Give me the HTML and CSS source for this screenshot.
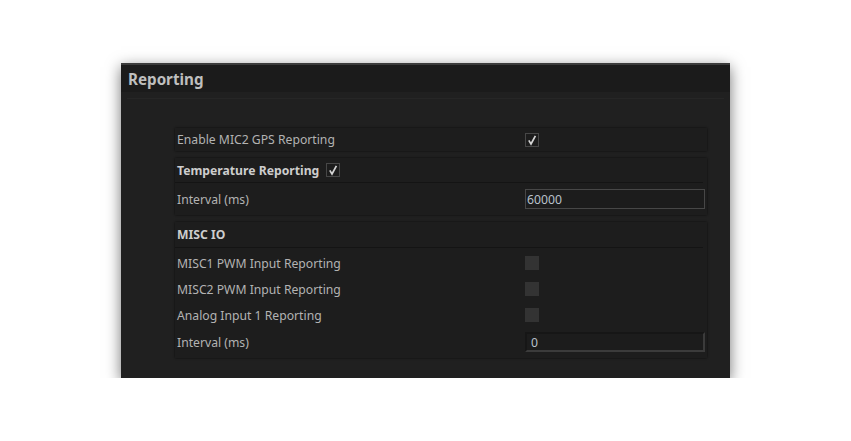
FILE: index.html
```html
<!DOCTYPE html>
<html lang="en">
<head>
    <meta charset="UTF-8">
    <title>Reporting</title>
    <link rel="stylesheet" href="styles.css">
</head>
<body>
    <div class="panel">
        <div class="panel-header">Reporting</div>
        <div class="panel-body">
            <div class="cards">
                <div class="card">
                    <div class="row row-single">
                        <span class="label">Enable MIC2 GPS Reporting</span>
                        <span class="check checked"><svg viewBox="0 0 12 12"><path d="M2.8 6.4 L5 10 L9.4 1.8"/></svg></span>
                    </div>
                </div>

                <div class="card">
                    <div class="card-head">
                        Temperature Reporting
                        <span class="check checked"><svg viewBox="0 0 12 12"><path d="M2.8 6.4 L5 10 L9.4 1.8"/></svg></span>
                    </div>
                    <div class="row row-input">
                        <span class="label">Interval (ms)</span>
                        <input class="field" type="text" value="60000">
                    </div>
                </div>

                <div class="card card-misc">
                    <div class="card-head">MISC IO</div>
                    <div class="rows">
                        <div class="row">
                            <span class="label">MISC1 PWM Input Reporting</span>
                            <span class="check"></span>
                        </div>
                        <div class="row">
                            <span class="label">MISC2 PWM Input Reporting</span>
                            <span class="check"></span>
                        </div>
                        <div class="row">
                            <span class="label">Analog Input 1 Reporting</span>
                            <span class="check"></span>
                        </div>
                        <div class="row row-last">
                            <span class="label">Interval (ms)</span>
                            <input class="field field-inset" type="text" value="0">
                        </div>
                    </div>
                </div>
            </div>
        </div>
    </div>
</body>
</html>
```

FILE: styles.css
```css
body {
    margin: 0;
    background-color: #fff;
    font-family: "Noto Sans", "Open Sans", sans-serif;
    font-size: 12.2px;
    color: #b3b3b3;
}

.panel {
    margin: 63px 0 0 121px;
    width: 609px;
    height: 315px;
    box-sizing: border-box;
    background-color: #202020;
    border-top: 2px solid #3b3b3b;
    box-shadow: 0 4px 14px rgba(0, 0, 0, 0.55);
}

.panel-header {
    height: 27px;
    line-height: 29px;
    padding-left: 7px;
    background-color: #1b1b1b;
    color: #bfbfbf;
    font-size: 15.2px;
    font-weight: bold;
}

.panel-body {
    margin: 6px 6px 0;
    border-top: 1px solid #262626;
}

.cards {
    padding: 29px 0 0 48px;
    width: 532px;
}

.card {
    background-color: #1d1d1d;
    box-shadow: 0 0 2px rgba(0, 0, 0, 0.7);
    margin-bottom: 7px;
}

.card-head {
    display: flex;
    align-items: center;
    height: 24px;
    padding-left: 2px;
    margin-right: 4px;
    border-bottom: 1px solid #141414;
    font-weight: bold;
    color: #cdcdcd;
}

.card-head .check {
    margin-left: 7px;
}

.card-misc .card-head {
    height: 25px;
}

.rows {
    padding: 2px 0;
}

.row {
    display: flex;
    align-items: center;
    height: 26px;
    padding-left: 2px;
}

.row-single {
    height: 23px;
}

.row-input {
    height: 32px;
}

.row-last {
    height: 28px;
}

.label {
    flex: 0 0 348px;
}

.check {
    display: inline-block;
    width: 14px;
    height: 14px;
    box-sizing: border-box;
    background-color: #333;
}

.check.checked {
    background-color: #1c1c1c;
    border: 1px solid #474747;
}

.check svg {
    display: block;
    width: 12px;
    height: 12px;
}

.check path {
    fill: none;
    stroke: #d4d4d4;
    stroke-width: 1.7;
}

.field {
    width: 180px;
    height: 20px;
    box-sizing: border-box;
    margin: 0;
    padding: 0 0 0 1px;
    background-color: #1c1c1c;
    border: 1px solid #474747;
    color: #b9c2cc;
    font-family: "Noto Sans", "Open Sans", sans-serif;
    font-size: 12.2px;
    outline: none;
}

.field-inset {
    border-width: 2px;
    border-color: #161616 #3b3b3b #3b3b3b #161616;
    padding-left: 4px;
}
```
